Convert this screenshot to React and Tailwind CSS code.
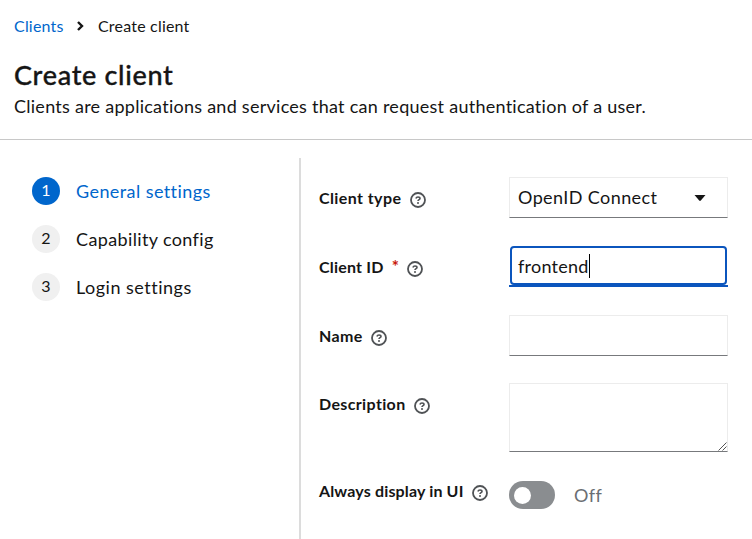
import React from "react";

function HelpIcon() {
  return (
    <svg className="block size-4 shrink-0" viewBox="0 0 16 16" fill="none" stroke="#4f5255">
      <circle cx="8" cy="8" r="7" strokeWidth="1.8" />
      <path d="M5.9 6.4C6.2 5.4 7 5 8 5c1.2 0 2 .6 2 1.5C10 7.6 8 7.7 8 9" strokeWidth="1.6" />
      <circle cx="8" cy="11" r="1" fill="#4f5255" stroke="none" />
    </svg>
  );
}

function Step({ number, label, tracking, active }) {
  return (
    <li className="flex h-[27px] items-center">
      <span
        className={`flex size-[28px] shrink-0 items-center justify-center rounded-full pb-px text-[16px] leading-none ${
          active ? "bg-[#0066cc] text-white" : "bg-[#f0f0f0] text-[#151515]"
        }`}
      >
        {number}
      </span>
      <span className={`ml-[16px] pt-px text-[18px] leading-6 whitespace-nowrap ${tracking} ${active ? "text-[#0066cc]" : "text-[#151515]"}`}>
        {label}
      </span>
    </li>
  );
}

function Field({ label, tracking, required, labelPad = "pt-px", iconGap, children }) {
  return (
    <div className="flex items-start">
      <div className={`flex h-[41px] w-[190px] shrink-0 items-center ${labelPad}`}>
        <span className={`text-[16px] font-bold leading-6 whitespace-nowrap ${tracking}`}>{label}</span>
        {required && <span className="ml-[8px] text-[17px] font-bold leading-6 text-[#c9190b]">*</span>}
        <span className={`pt-[4px] ${iconGap}`}>
          <HelpIcon />
        </span>
      </div>
      {children}
    </div>
  );
}

const box = "w-[219px] border border-[#ececec] border-b-[#77797c] bg-white";

export default function App() {
  return (
    <div className="flex h-[539px] w-[752px] flex-col overflow-hidden bg-white font-['Lato',sans-serif] text-[#151515]">
      <header className="h-[140px] shrink-0 border-b border-[#c8c8c8] pl-[14px]">
        <nav className="flex h-[52px] items-center text-[16px] leading-6">
          <a className="w-[50px] tracking-[0.2px] whitespace-nowrap text-[#0066cc]">Clients</a>
          <svg className="ml-[13px] h-[10px] w-[7px]" viewBox="0 0 7 10" fill="none" stroke="#151515" strokeWidth="2.4">
            <path d="M1 1l4 4-4 4" />
          </svg>
          <span className="ml-[14px] tracking-[0.2px] whitespace-nowrap">Create client</span>
        </nav>
        <h1 className="mt-[7px] text-[27px] font-medium leading-8 tracking-[0.68px] [-webkit-text-stroke:0.35px_#151515]">Create client</h1>
        <p className="mt-[3px] text-[18px] leading-6 tracking-[0.26px] whitespace-nowrap">
          Clients are applications and services that can request authentication of a user.
        </p>
      </header>
      <div className="flex flex-1">
        <ol className="mt-[37px] flex w-[299px] shrink-0 flex-col gap-[21px] pl-8">
          <Step number="1" label="General settings" tracking="tracking-[0.42px]" active />
          <Step number="2" label="Capability config" tracking="tracking-[0.37px]" />
          <Step number="3" label="Login settings" tracking="tracking-[0.5px]" />
        </ol>
        <main className="mt-[18px] flex flex-1 flex-col border-l-2 border-[#dcdcdc] pl-[18px] pt-[19px]">
          <Field label="Client type" tracking="tracking-[0.4px]" iconGap="ml-[9px]">
            <div className={`${box} flex h-[41px] items-center justify-between pr-[21px] pl-2 text-[18px]`}>
              <span className="tracking-[0.4px]">OpenID Connect</span>
              <svg className="h-[6px] w-3" viewBox="0 0 12 6" fill="#151515">
                <path d="M.5 0h11L6.8 5.5Q6 6.3 5.2 5.5z" />
              </svg>
            </div>
          </Field>
          <div className="h-7" />
          <Field label="Client ID" tracking="tracking-[0.2px]" iconGap="ml-[8px]" labelPad="pt-0" required>
            <div className="h-[41px] w-[219px] border-b-2 border-[#0b55bd] px-px">
              <div className="flex h-[39px] items-center rounded-[4px] border-2 border-[#0b55bd] bg-white pt-px pl-[6px] text-[18px]">
                <span className="tracking-[0.25px]">frontend</span>
                <span className="h-6 w-px bg-black" />
              </div>
            </div>
          </Field>
          <div className="h-7" />
          <Field label="Name" tracking="tracking-[0.4px]" iconGap="ml-[8px]" labelPad="pt-0">
            <div className={`${box} h-[41px]`} />
          </Field>
          <div className="h-[27px]" />
          <Field label="Description" tracking="tracking-[0.36px]" iconGap="ml-[8px]" labelPad="pt-px">
            <div className={`${box} flex h-[69px] items-end justify-end`}>
              <svg className="h-[9px] w-[9px]" viewBox="0 0 9 9" stroke="#555" strokeWidth="1">
                <path d="M.5 8.5l8-8M4.5 8.5l4-4" />
              </svg>
            </div>
          </Field>
          <div className="h-[18px]" />
          <Field label="Always display in UI" tracking="tracking-[0.15px]" iconGap="ml-[8px]" labelPad="pt-px">
            <div className="mt-[11px] flex h-7 items-center">
              <span className="flex h-7 w-[46px] items-center rounded-full bg-[#8a8d90] pl-[5px]">
                <span className="size-[17px] rounded-full bg-white" />
              </span>
              <span className="ml-[19px] text-[18px] tracking-[0.4px] text-[#6a6e73]">Off</span>
            </div>
          </Field>
        </main>
      </div>
    </div>
  );
}
